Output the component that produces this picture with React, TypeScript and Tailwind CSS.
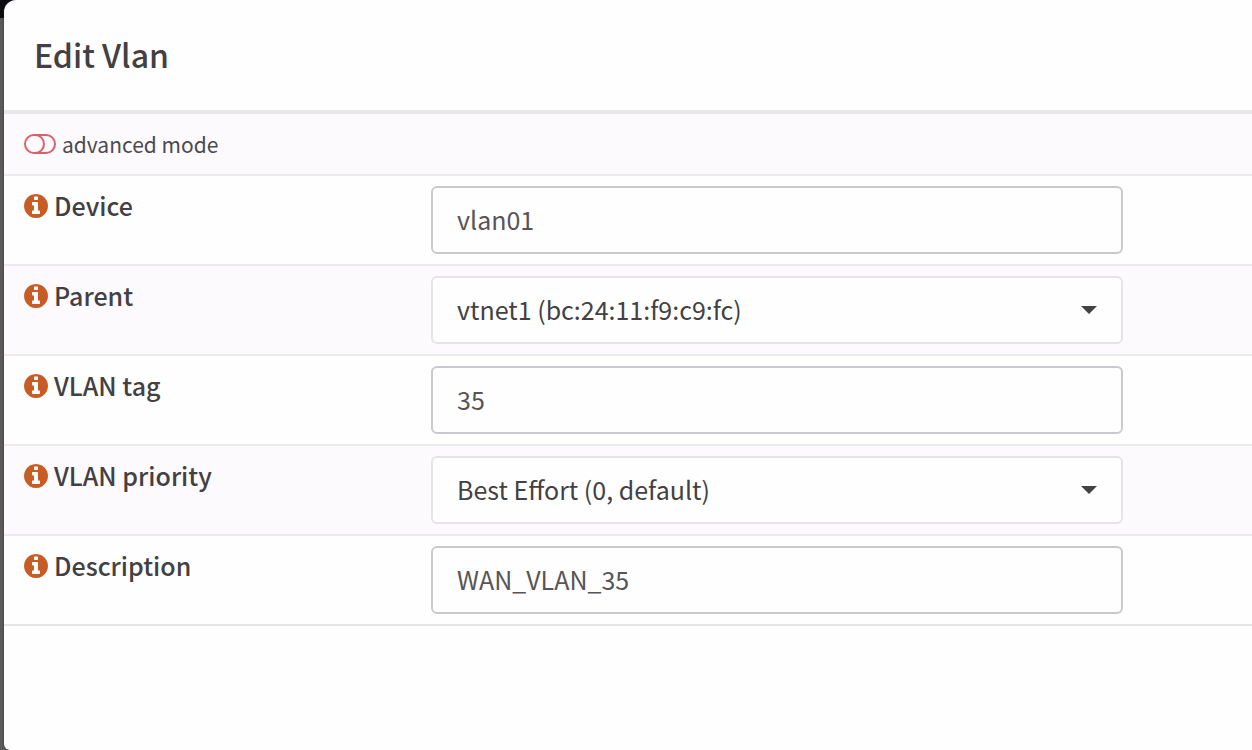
import { useState } from "react";

const labelClass = "text-[25px] leading-[38px] font-medium text-[#434043]";

const controlClass =
  "block h-[68px] w-full rounded-md border-2 bg-[#fefefe] px-6 text-[25px] outline-none";

const ToggleOffIcon = () => {
  return (
    <svg viewBox="0 0 32 20" className="h-5 w-8" fill="none" stroke="#d9606b" strokeWidth="2">
      <rect x="1" y="1" width="30" height="18" rx="9" />
      <path d="M11 1a9 9 0 0 1 0 18" />
    </svg>
  );
};

const InfoIcon = () => {
  return (
    <svg viewBox="128 128 1536 1536" className="h-6 w-6" fill="#c75d25">
      <path d="M1152 1376v-160q0-14-9-23t-23-9h-96v-512q0-14-9-23t-23-9h-320q-14 0-23 9t-9 23v160q0 14 9 23t23 9h96v320h-96q-14 0-23 9t-9 23v160q0 14 9 23t23 9h448q14 0 23-9t9-23zM1024 480v-160q0-14-9-23t-23-9h-192q-14 0-23 9t-9 23v160q0 14 9 23t23 9h192q14 0 23-9t9-23zM1664 896q0 209-103 385.5t-279.5 279.5-385.5 103-385.5-103-279.5-279.5-103-385.5 103-385.5 279.5-279.5 385.5-103 385.5 103 279.5 279.5 103 385.5z" />
    </svg>
  );
};

const FormRow = ({ id, label, children }: { id: string; label: string; children: React.ReactNode }) => {
  return (
    <div className="grid grid-cols-[407fr_692fr_109fr] border-t-2 border-[#ebebed] px-5 py-2.5 odd:bg-[#fcfafd] even:bg-[#fefefe]">
      <div className="flex items-start gap-1.5">
        <button type="button" aria-label={`Help for ${label}`} className="mt-2">
          <InfoIcon />
        </button>
        <label htmlFor={id} className={labelClass}>
          {label}
        </label>
      </div>
      <div>{children}</div>
    </div>
  );
};

const TextField = ({ id, label, value }: { id: string; label: string; value: string }) => {
  return (
    <FormRow id={id} label={label}>
      <input
        id={id}
        type="text"
        defaultValue={value}
        className={`${controlClass} border-[#cbc9cd] pb-0.5 text-[#575557]`}
      />
    </FormRow>
  );
};

const SelectField = ({ id, label, value }: { id: string; label: string; value: string }) => {
  return (
    <FormRow id={id} label={label}>
      <div className="relative">
        <select
          id={id}
          defaultValue={value}
          className={`${controlClass} appearance-none border-[#e5e4e7] text-[#434143]`}
        >
          <option value={value}>{value}</option>
        </select>
        <svg
          viewBox="0 0 16 8"
          className="pointer-events-none absolute top-[30px] right-[26px] h-2 w-4"
          fill="#434143"
        >
          <path d="M0 0h16L8 8z" />
        </svg>
      </div>
    </FormRow>
  );
};

const App = () => {
  const [advanced, setAdvanced] = useState(false);

  return (
    <div className="flex min-h-screen bg-[linear-gradient(to_bottom,#0d0c0e_18px,#5c5959_18px)] pl-1 font-['Noto_Sans_CJK_SC','Noto_Sans',sans-serif]">
      <div
        role="dialog"
        aria-labelledby="dialog-title"
        className="grow overflow-hidden rounded-tl-xl rounded-bl-md bg-[#fefefe] shadow-[0_0_2px_#222]"
      >
        <header className="border-b-4 border-[#e8e7e9] px-[30px] pt-[30px] pb-8">
          <h1 id="dialog-title" className="text-[32px] leading-[48px] font-medium text-[#434043]">
            Edit Vlan
          </h1>
        </header>
        <form className="border-b-2 border-[#e5e5e7]">
          <div className="flex h-[60px] items-center bg-[#fcfafd] px-5">
            <button
              type="button"
              aria-pressed={advanced}
              onClick={() => setAdvanced(!advanced)}
              className="flex items-center gap-1.5 text-[21px] leading-8 text-[#4c4a4d]"
            >
              <ToggleOffIcon />
              advanced mode
            </button>
          </div>
          <TextField id="device" label="Device" value="vlan01" />
          <SelectField id="parent" label="Parent" value="vtnet1 (bc:24:11:f9:c9:fc)" />
          <TextField id="tag" label="VLAN tag" value="35" />
          <SelectField id="priority" label="VLAN priority" value="Best Effort (0, default)" />
          <TextField id="description" label="Description" value="WAN_VLAN_35" />
        </form>
      </div>
    </div>
  );
};

export default App;
